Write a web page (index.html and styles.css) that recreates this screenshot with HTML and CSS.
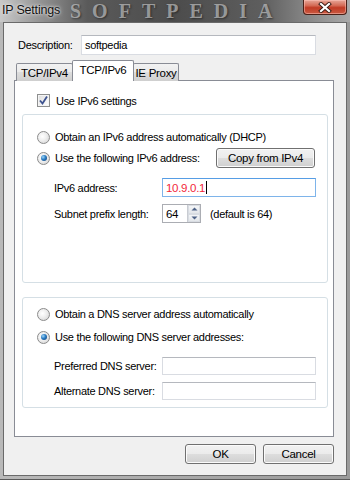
FILE: index.html
```html
<!DOCTYPE html>
<html lang="en">
<head>
  <meta charset="UTF-8">
  <title>IP Settings</title>
  <link rel="stylesheet" href="styles.css">
</head>
<body>
  <div class="window">
    <div class="titlebar">
      <span class="watermark">SOFTPEDIA</span>
      <span class="title">IP Settings</span>
      <span class="close-btn">
        <svg width="14" height="11" viewBox="0 0 14 11">
          <path d="M3 2 L11 9 M11 2 L3 9" stroke="#3a1a14" stroke-width="4" stroke-linecap="square"/>
          <path d="M3 2 L11 9 M11 2 L3 9" stroke="#ffffff" stroke-width="2.2" stroke-linecap="square"/>
        </svg>
      </span>
    </div>

    <div class="client">
      <div class="desc-row">
        <span class="desc-label">Description:</span>
        <div class="textbox desc-box">softpedia</div>
      </div>

      <div class="tabs">
        <div class="tab">TCP/IPv4</div>
        <div class="tab active">TCP/IPv6</div>
        <div class="tab">IE Proxy</div>
      </div>

      <div class="panel">
        <div class="check-row">
          <span class="checkbox">
            <svg width="11" height="11" viewBox="0 0 11 11">
              <path d="M2 5.5 L4.5 8.5 L9 1.5" fill="none" stroke="#3d528f" stroke-width="1.8"/>
            </svg>
          </span>
          Use IPv6 settings
        </div>

        <div class="group group-addr">
          <div class="radio-row">
            <span class="radio"></span>
            Obtain an IPv6 address automatically (DHCP)
          </div>
          <div class="radio-row with-button">
            <span class="radio checked"></span>
            Use the following IPv6 address:
            <span class="btn copy-btn">Copy from IPv4</span>
          </div>
          <div class="field-row first-field">
            <span class="field-label">IPv6 address:</span>
            <div class="textbox wide focused"><span class="ip-text">10.9.0.1</span><span class="caret"></span></div>
          </div>
          <div class="field-row">
            <span class="field-label">Subnet prefix length:</span>
            <div class="spinbox">
              <span class="spin-value">64</span>
              <span class="spin-arrows">
                <span class="spin-arrow">
                  <svg width="7" height="4" viewBox="0 0 7 4"><path d="M0.5 3.5 L3.5 0.5 L6.5 3.5 Z" fill="#4d6185"/></svg>
                </span>
                <span class="spin-arrow">
                  <svg width="7" height="4" viewBox="0 0 7 4"><path d="M0.5 0.5 L3.5 3.5 L6.5 0.5 Z" fill="#4d6185"/></svg>
                </span>
              </span>
            </div>
            <span class="hint">(default is 64)</span>
          </div>
        </div>

        <div class="group group-dns">
          <div class="radio-row">
            <span class="radio"></span>
            Obtain a DNS server address automatically
          </div>
          <div class="radio-row second-radio">
            <span class="radio checked"></span>
            Use the following DNS server addresses:
          </div>
          <div class="field-row dns-first">
            <span class="field-label">Preferred DNS server:</span>
            <div class="textbox wide"></div>
          </div>
          <div class="field-row">
            <span class="field-label">Alternate DNS server:</span>
            <div class="textbox wide"></div>
          </div>
        </div>
      </div>

      <div class="buttons">
        <span class="btn dlg-btn">OK</span>
        <span class="btn dlg-btn">Cancel</span>
      </div>
    </div>
  </div>
</body>
</html>
```

FILE: styles.css
```css
* {
  box-sizing: border-box;
}

body {
  margin: 0;
  width: 350px;
  height: 480px;
  overflow: hidden;
  background: #5c5c5c;
  font-family: "Liberation Sans", Arial, sans-serif;
  font-size: 11px;
  letter-spacing: -0.3px;
  color: #000;
}

.window {
  width: 350px;
  height: 480px;
  background: linear-gradient(to right, #b9b9b9 0%, #9a9a9a 100%);
  border-bottom: 1px solid #5a5a5a;
  display: flex;
  flex-direction: column;
}

/* title bar */
.titlebar {
  position: relative;
  height: 22px;
  flex-shrink: 0;
  display: flex;
  align-items: flex-start;
  background: linear-gradient(to right, #c9c9c9 0%, #9a9a9a 10%, #5a5a5a 25%, #4c4c4c 50%, #5e5e5e 75%, #8e8e8e 90%, #a9a9a9 100%);
}

.watermark {
  position: absolute;
  left: 70px;
  top: 1px;
  line-height: 20px;
  font-family: "Liberation Serif", serif;
  font-weight: bold;
  font-size: 20px;
  letter-spacing: 11px;
  color: rgba(215, 215, 215, 0.6);
  text-shadow: 1px 1px 2px rgba(0, 0, 0, 0.45);
}

.title {
  position: relative;
  margin: 3px 0 0 2px;
  font-family: "Liberation Sans", Arial, sans-serif;
  font-size: 12.5px;
  letter-spacing: -0.2px;
  color: #111;
  text-shadow: 0 0 4px #e8e8e8, 0 0 2px #f0f0f0;
}

.close-btn {
  position: relative;
  margin-left: auto;
  margin-right: 3px;
  width: 44px;
  height: 15px;
  display: flex;
  align-items: center;
  justify-content: center;
  border: 1px solid #4a2018;
  border-top: none;
  border-radius: 0 0 4px 4px;
  background: linear-gradient(#e7a698 0%, #d46a55 40%, #c13b25 55%, #c95a42 100%);
  box-shadow: inset 0 0 0 1px rgba(255, 200, 190, 0.5);
}

/* client area */
.client {
  flex: 1;
  margin: 0 3px 3px 3px;
  border: 1px solid #6a6a6a;
  background: #f0f0f0;
  display: flex;
  flex-direction: column;
  padding: 0 12px 0 10px;
}

.desc-row {
  display: flex;
  align-items: center;
  margin-top: 12px;
  padding-left: 4px;
}

.desc-label {
  width: 63px;
}

.textbox {
  height: 19px;
  background: #fff;
  border: 1px solid #d9dce2;
  border-top-color: #b5b8be;
  display: flex;
  align-items: center;
  padding-left: 3px;
}

.desc-box {
  width: 235px;
  height: 20px;
}

/* tabs */
.tabs {
  display: flex;
  align-items: flex-end;
  margin-top: 6px;
  padding-left: 2px;
  height: 20px;
  position: relative;
  z-index: 1;
  margin-bottom: -1px;
}

.tab {
  flex-shrink: 0;
  white-space: nowrap;
  height: 18px;
  border: 1px solid #898c95;
  border-bottom: none;
  border-radius: 2px 2px 0 0;
  background: linear-gradient(#f2f2f2 0%, #ebebeb 45%, #dddddd 50%, #cfcfcf 100%);
  display: flex;
  align-items: center;
  justify-content: center;
  font-size: 11.5px;
}

.tab:first-child {
  width: 57px;
}

.tab.active {
  height: 21px;
  width: 62px;
  margin: 0 -1px;
  background: #fff;
  padding-bottom: 3px;
  position: relative;
  z-index: 2;
}

.tab:last-child {
  width: 46px;
}

.panel {
  width: 320px;
  height: 357px;
  border: 1px solid #898c95;
  background: #fff;
  display: flex;
  flex-direction: column;
  padding-left: 7px;
}

.check-row {
  display: flex;
  align-items: center;
  height: 13px;
  margin-top: 13px;
  padding-left: 15px;
}

.checkbox {
  width: 13px;
  height: 13px;
  border: 1px solid #8e8f8f;
  background: linear-gradient(135deg, #dcdcdc 0%, #f6f6f6 70%, #ffffff 100%);
  box-shadow: inset 0 0 0 1px #f4f4f4;
  margin-right: 6px;
  display: flex;
  align-items: center;
  justify-content: center;
}

.group {
  width: 306px;
  border: 1px solid #d5dfe5;
  border-radius: 3px;
  background: #fff;
  display: flex;
  flex-direction: column;
}

.group-addr {
  height: 169px;
  margin-top: 7px;
  padding-top: 14px;
}

.group-dns {
  height: 111px;
  margin-top: 14px;
  padding-top: 8px;
}

.radio-row {
  display: flex;
  align-items: center;
  height: 16px;
  padding-left: 14px;
  padding-right: 12px;
}

.radio-row.with-button {
  height: 20px;
  margin-top: 3px;
}

.radio-row.second-radio {
  margin-top: 7px;
}

.radio {
  width: 13px;
  height: 13px;
  border-radius: 50%;
  border: 1px solid #8b8b8b;
  background: radial-gradient(circle at 40% 40%, #ffffff 0%, #f0f0f0 40%, #cfcfcf 100%);
  margin-right: 5px;
  display: flex;
  align-items: center;
  justify-content: center;
}

.radio.checked::after {
  content: "";
  width: 6px;
  height: 6px;
  border-radius: 50%;
  background: radial-gradient(circle at 35% 35%, #9fd6f7 0%, #2a7bc2 45%, #123a6c 100%);
}

.btn {
  display: flex;
  align-items: center;
  justify-content: center;
  height: 20px;
  border: 1px solid #707070;
  border-radius: 3px;
  background: linear-gradient(#f2f2f2 0%, #ebebeb 48%, #dddddd 52%, #cfcfcf 100%);
  box-shadow: inset 0 0 0 1px #fbfbfb;
  font-size: 11.5px;
}

.copy-btn {
  margin-left: auto;
  width: 99px;
}

.field-row {
  display: flex;
  align-items: center;
  padding-left: 31px;
  margin-top: 7px;
}

.field-row.first-field {
  margin-top: 10px;
}

.field-row.dns-first {
  margin-top: 12px;
}

.field-label {
  width: 108px;
}

.textbox.wide {
  width: 154px;
  height: 18px;
}

.first-field .textbox.wide {
  height: 19px;
}

.textbox.focused {
  border: 1px solid #7eb4ea;
  border-top-color: #569de5;
}

.ip-text {
  color: #f2283a;
  font-size: 11.5px;
}

.caret {
  width: 1px;
  height: 13px;
  background: #000;
  margin-left: 1px;
}

.spinbox {
  width: 39px;
  height: 19px;
  border: 1px solid #abadb3;
  background: #fff;
  display: flex;
  align-items: stretch;
}

.spin-value {
  flex: 1;
  padding-left: 3px;
  display: flex;
  align-items: center;
  font-size: 11.5px;
}

.spin-arrows {
  width: 13px;
  display: flex;
  flex-direction: column;
  border-left: 1px solid #c9ccd2;
}

.spin-arrow {
  flex: 1;
  display: flex;
  align-items: center;
  justify-content: center;
  background: linear-gradient(#f4f5f7, #e3e6ea);
  border: 1px solid #d8dce2;
}

.hint {
  margin-left: 9px;
}

/* dialog buttons */
.buttons {
  display: flex;
  justify-content: flex-end;
  gap: 7px;
  margin-top: 7px;
}

.dlg-btn {
  width: 71px;
}
```
